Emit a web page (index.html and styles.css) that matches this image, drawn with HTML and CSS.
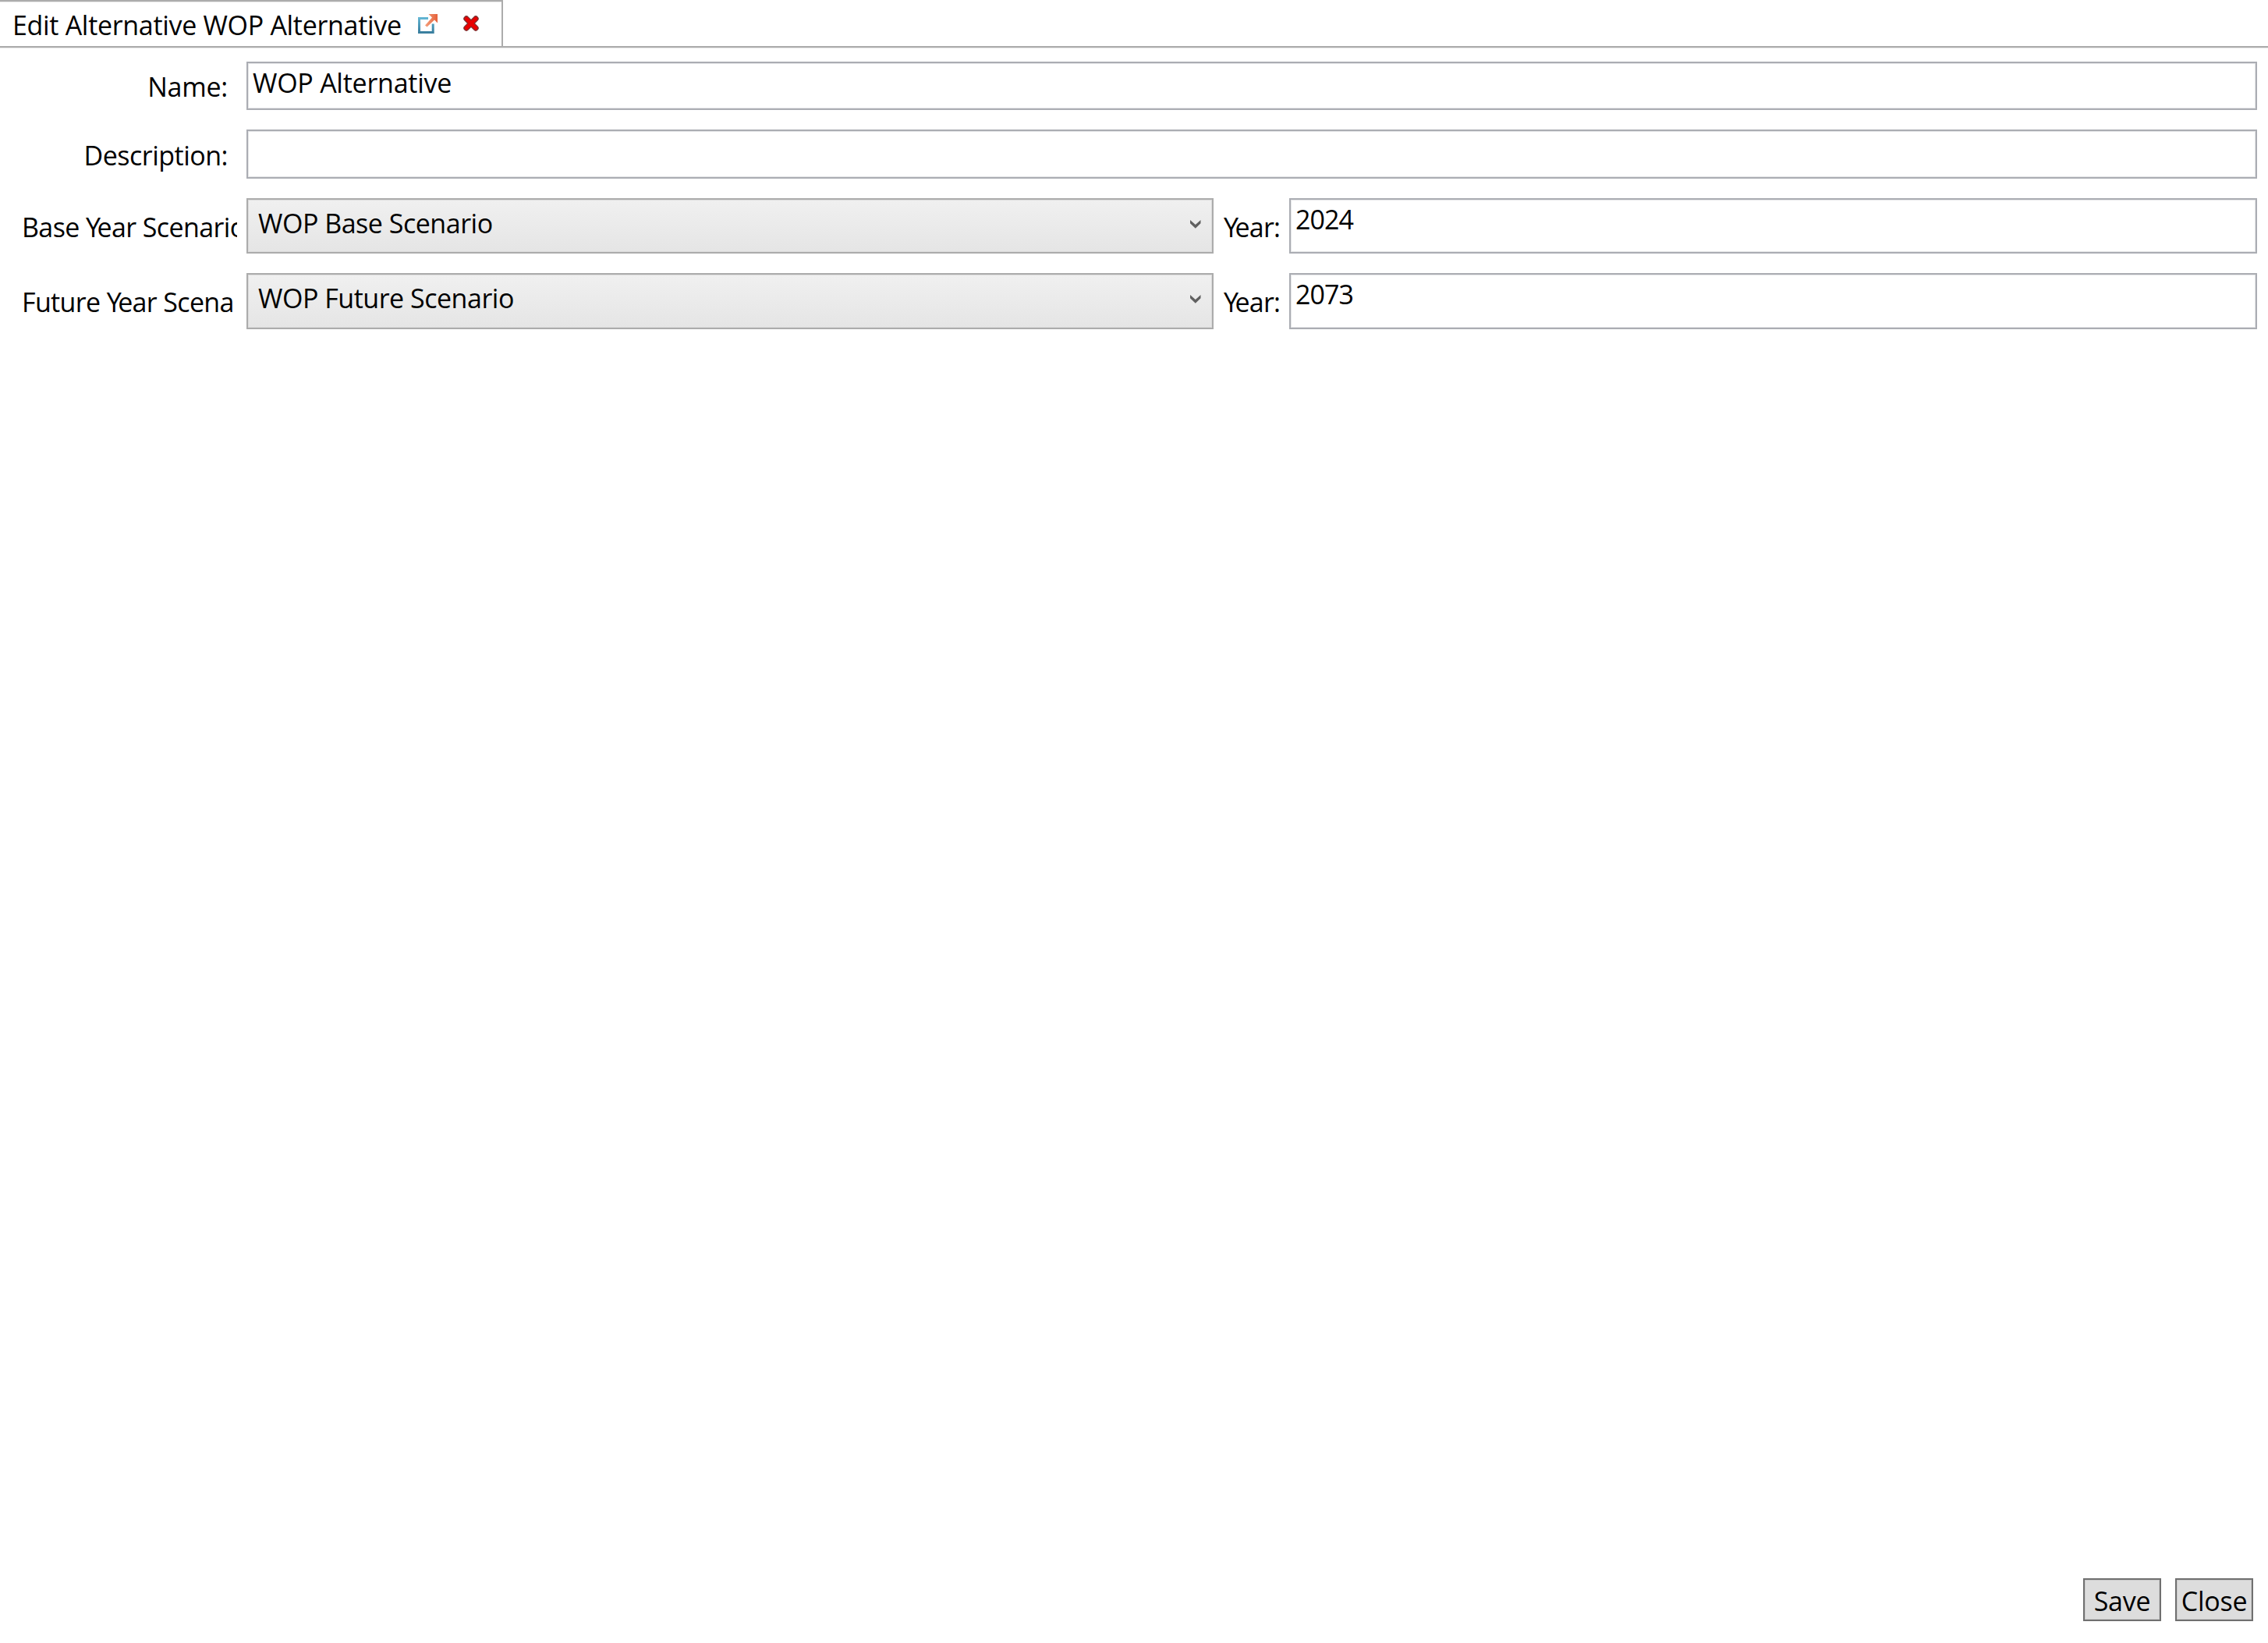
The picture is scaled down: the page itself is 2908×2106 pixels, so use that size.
FILE: index.html
```
<!DOCTYPE html>
<html lang="en">
<head>
    <meta charset="UTF-8">
    <meta name="viewport" content="width=device-width, initial-scale=1.0">
    <title>Edit Alternative WOP Alternative</title>
    <link rel="stylesheet" href="styles.css">
</head>

<body>

    <div class="tab-bar">
        <div class="tab">
            <span class="tab-title">Edit Alternative WOP Alternative</span>
            <svg class="popout-icon" width="25" height="25" viewBox="0 0 25 25">
                <defs>
                    <linearGradient id="boxColor" x1="0" y1="0" x2="0" y2="1">
                        <stop offset="0" stop-color="#62b4d2"/>
                        <stop offset="1" stop-color="#3a7f9f"/>
                    </linearGradient>
                    <linearGradient id="arrowColor" x1="0" y1="0" x2="1" y2="0">
                        <stop offset="0" stop-color="#f5a07c"/>
                        <stop offset="1" stop-color="#e5613a"/>
                    </linearGradient>
                </defs>
                <path d="M13 5.5H1.5V23.5H19.2V12.5" fill="none" stroke="url(#boxColor)" stroke-width="3"/>
                <path d="M13.5 0H25V11.5L21 7.5L11.5 16.5L9 14.5L18 4.5Z" fill="url(#arrowColor)"/>
            </svg>
            <svg class="close-icon" width="20" height="20" viewBox="0 0 20 20">
                <path d="M4 4L16 16M16 4L4 16" fill="none" stroke="#7a3030" stroke-width="7.4" stroke-linecap="round"/>
                <path d="M4 4L16 16M16 4L4 16" fill="none" stroke="#e80000" stroke-width="4.8" stroke-linecap="round"/>
            </svg>
        </div>
    </div>

    <form class="editor">
        <div class="row">
            <label class="label" for="name">Name:</label>
            <input class="text-box" type="text" id="name" value="WOP Alternative">
        </div>
        <div class="row row-description">
            <label class="label label-description" for="description">Description:</label>
            <input class="text-box" type="text" id="description">
        </div>
        <div class="row row-base">
            <label class="label label-scenario" for="baseScenario">Base <span class="kern">Y</span>ear Scenario:</label>
            <div class="combo">
                <select class="combo-box" id="baseScenario">
                    <option>WOP Base Scenario</option>
                </select>
                <svg class="chevron" width="14" height="11" viewBox="0 0 14 11">
                    <path d="M0 0L6.8 6L13.5 0V4.2L6.8 10.8L0 4.2Z" fill="#606060"/>
                </svg>
            </div>
            <label class="label-year" for="baseYear"><span class="kern">Y</span>ear:</label>
            <input class="text-box year" type="text" id="baseYear" value="2024">
        </div>
        <div class="row row-future">
            <label class="label label-scenario" for="futureScenario">Future <span class="kern">Y</span>ear Scenario:</label>
            <div class="combo">
                <select class="combo-box" id="futureScenario">
                    <option>WOP Future Scenario</option>
                </select>
                <svg class="chevron" width="14" height="11" viewBox="0 0 14 11">
                    <path d="M0 0L6.8 6L13.5 0V4.2L6.8 10.8L0 4.2Z" fill="#606060"/>
                </svg>
            </div>
            <label class="label-year" for="futureYear"><span class="kern">Y</span>ear:</label>
            <input class="text-box year" type="text" id="futureYear" value="2073">
        </div>
    </form>

    <div class="buttons">
        <button class="button" type="button">Save</button>
        <button class="button" type="button">Close</button>
    </div>

</body>
</html>
```

FILE: styles.css
```
* {
    box-sizing: border-box;
}

body {
    margin: 0;
    height: 100vh;
    display: flex;
    flex-direction: column;
    background-color: #fff;
    color: #000;
    font-family: "Open Sans", "Noto Sans", sans-serif;
    font-size: 34px;
    line-height: 46px;
    letter-spacing: -0.25px;
    overflow: hidden;
}

input,
select,
button {
    font: inherit;
    letter-spacing: inherit;
    color: inherit;
    margin: 0;
    border-radius: 0;
    outline: none;
}

.tab-bar {
    display: flex;
    height: 61px;
    border-bottom: 2px solid #acacac;
    box-shadow: 0 1px 0 #e6e6e6;
    flex-shrink: 0;
}

.tab {
    display: flex;
    align-items: flex-start;
    width: 645px;
    padding-left: 16px;
    border-top: 2px solid #acacac;
    border-right: 2px solid #acacac;
    box-shadow: inset 0 1px 0 #e6e6e6;
}

.tab-title {
    width: 520px;
    padding-top: 7px;
    white-space: nowrap;
    letter-spacing: -0.31px;
}

.popout-icon {
    margin-top: 16px;
}

.close-icon {
    margin-top: 18px;
    margin-left: 33px;
}

.editor {
    display: flex;
    flex-direction: column;
    gap: 25px;
    padding: 18px 14px 0 0;
}

.row {
    display: flex;
    height: 62px;
}

.row-description {
    height: 63px;
}

.row-base {
    height: 71px;
}

.row-future {
    height: 72px;
}

.label {
    width: 316px;
    flex-shrink: 0;
    padding-top: 9px;
    padding-right: 24px;
    text-align: right;
    white-space: nowrap;
}

.label-description {
    padding-top: 10px;
    letter-spacing: -0.5px;
}

/* fixed width column, the text is cut at its edge */
.label-scenario {
    width: 276px;
    margin: 0 12px 0 28px;
    padding: 14px 0 0;
    text-align: left;
    letter-spacing: -0.6px;
    overflow: hidden;
}

.row-future .label-scenario {
    width: 273px;
    margin-right: 15px;
    letter-spacing: -0.65px;
}

.kern {
    letter-spacing: -4.5px;
}

.label-year {
    width: 97px;
    flex-shrink: 0;
    padding: 14px 0 0 13px;
    letter-spacing: -0.8px;
}

.text-box {
    flex: 1;
    min-width: 0;
    height: 100%;
    padding: 2px 6px 10px;
    background-color: #fff;
    border: 2px solid #abadb3;
    box-shadow: inset 0 0 0 1px #e5e6e8;
}

.row .year {
    padding-bottom: 19px;
    letter-spacing: -0.9px;
}

.row-future .year {
    padding-bottom: 20px;
}

.combo {
    position: relative;
    width: 1240px;
    flex-shrink: 0;
}

.combo-box {
    appearance: none;
    width: 100%;
    height: 100%;
    padding: 7px 13px 14px;
    background: linear-gradient(#f0f0f0, #e5e5e5);
    border: 2px solid #acacac;
    box-shadow: inset 0 0 0 1px #dcdcdc;
    letter-spacing: -0.48px;
}

.row-future .combo-box {
    padding-bottom: 16px;
}

.chevron {
    position: absolute;
    top: 28px;
    right: 16px;
}

.buttons {
    display: flex;
    justify-content: flex-end;
    gap: 18px;
    margin-top: auto;
    padding: 0 19px 28px 0;
}

.button {
    width: 100px;
    height: 55px;
    padding: 4px 0 1px;
    background-color: #ddd;
    border: 2px solid #707070;
    box-shadow: inset 0 0 0 1px #cacaca;
}
```
